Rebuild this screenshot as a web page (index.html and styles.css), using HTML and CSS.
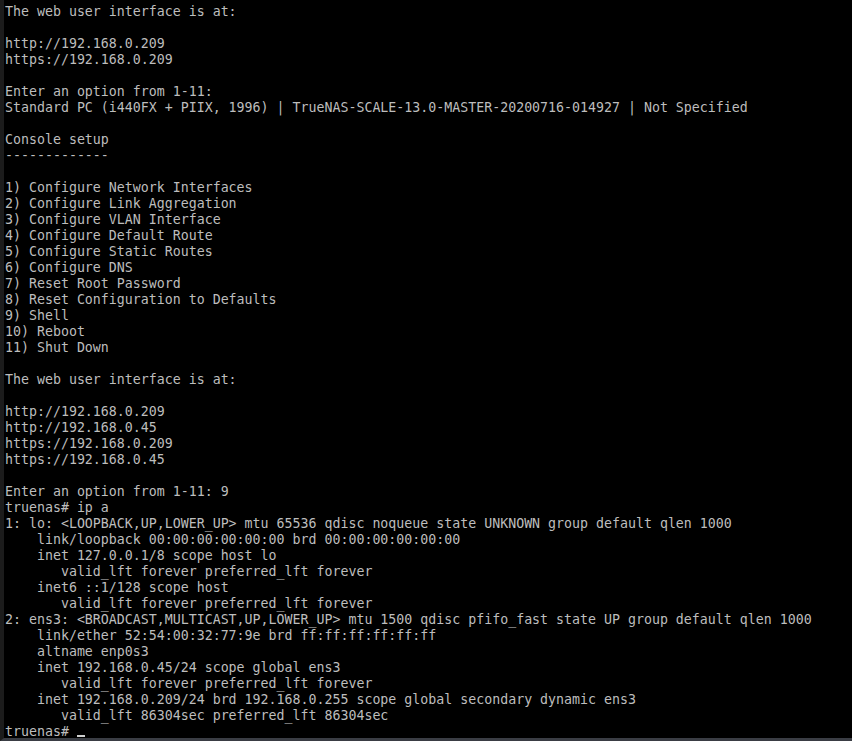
FILE: index.html
```html
<!DOCTYPE html>
<html lang="en">
<head>
<meta charset="utf-8">
<title>TrueNAS console</title>
<link rel="stylesheet" href="styles.css">
</head>
<body>
<div class="term">
<pre class="out">The web user interface is at:

http://192.168.0.209
https://192.168.0.209

Enter an option from 1-11:
Standard PC (i440FX + PIIX, 1996) | TrueNAS-SCALE-13.0-MASTER-20200716-014927 | Not Specified

Console setup
-------------

1) Configure Network Interfaces
2) Configure Link Aggregation
3) Configure VLAN Interface
4) Configure Default Route
5) Configure Static Routes
6) Configure DNS
7) Reset Root Password
8) Reset Configuration to Defaults
9) Shell
10) Reboot
11) Shut Down

The web user interface is at:

http://192.168.0.209
http://192.168.0.45
https://192.168.0.209
https://192.168.0.45

Enter an option from 1-11: 9
truenas# ip a
1: lo: &lt;LOOPBACK,UP,LOWER_UP&gt; mtu 65536 qdisc noqueue state UNKNOWN group default qlen 1000
    link/loopback 00:00:00:00:00:00 brd 00:00:00:00:00:00
    inet 127.0.0.1/8 scope host lo
       valid_lft forever preferred_lft forever
    inet6 ::1/128 scope host
       valid_lft forever preferred_lft forever
2: ens3: &lt;BROADCAST,MULTICAST,UP,LOWER_UP&gt; mtu 1500 qdisc pfifo_fast state UP group default qlen 1000
    link/ether 52:54:00:32:77:9e brd ff:ff:ff:ff:ff:ff
    altname enp0s3
    inet 192.168.0.45/24 scope global ens3
       valid_lft forever preferred_lft forever
    inet 192.168.0.209/24 brd 192.168.0.255 scope global secondary dynamic ens3
       valid_lft 86304sec preferred_lft 86304sec
truenas# <span class="cursor"></span></pre>
</div>
</body>
</html>
```

FILE: styles.css
```css
html, body {
  margin: 0;
  padding: 0;
  background: #000;
}

.term {
  box-sizing: border-box;
  height: 741px;
  width: 852px;
  overflow: hidden;
  background: #000;
  border-left: 4px solid #1c1c1c;
  border-bottom: 3px solid #3a3d44;
  padding: 4px 0 0 1px;
}

.out {
  margin: 0 0 -2px 0;
  font-family: "DejaVu Sans Mono", "Liberation Mono", monospace;
  font-size: 13.288px;
  line-height: 16px;
  color: #bdbdbd;
  white-space: pre;
}

.cursor {
  display: inline-block;
  width: 8px;
  height: 2px;
  background: #d0d0d0;
  vertical-align: -1px;
}
```
